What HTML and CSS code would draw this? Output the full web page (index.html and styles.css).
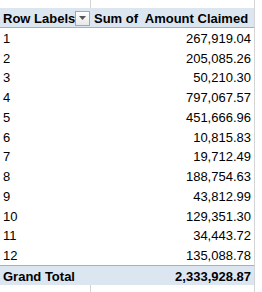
FILE: index.html
```html
<!DOCTYPE html>
<html lang="en">
<head>
    <meta charset="UTF-8">
    <title>Pivot Table - Amount Claimed</title>
    <link rel="stylesheet" href="styles.css">
</head>
<body>
    <div class="sheet">
        <div class="row filler top">
            <div class="cell col-a"></div>
            <div class="cell col-b"></div>
            <div class="cell col-c"></div>
        </div>

        <div class="row header">
            <div class="cell col-a">
                <span>Row Labels</span>
                <span class="filter-btn">
                    <svg width="7" height="4" viewBox="0 0 7 4"><path d="M0 0H7L3.5 4Z" fill="#555"/></svg>
                </span>
            </div>
            <div class="cell col-b">Sum of&nbsp; Amount Claimed</div>
            <div class="cell col-c"></div>
        </div>

        <div class="row"><div class="cell col-a">1</div><div class="cell col-b num">267,919.04</div><div class="cell col-c"></div></div>
        <div class="row"><div class="cell col-a">2</div><div class="cell col-b num">205,085.26</div><div class="cell col-c"></div></div>
        <div class="row"><div class="cell col-a">3</div><div class="cell col-b num">50,210.30</div><div class="cell col-c"></div></div>
        <div class="row"><div class="cell col-a">4</div><div class="cell col-b num">797,067.57</div><div class="cell col-c"></div></div>
        <div class="row"><div class="cell col-a">5</div><div class="cell col-b num">451,666.96</div><div class="cell col-c"></div></div>
        <div class="row"><div class="cell col-a">6</div><div class="cell col-b num">10,815.83</div><div class="cell col-c"></div></div>
        <div class="row"><div class="cell col-a">7</div><div class="cell col-b num">19,712.49</div><div class="cell col-c"></div></div>
        <div class="row"><div class="cell col-a">8</div><div class="cell col-b num">188,754.63</div><div class="cell col-c"></div></div>
        <div class="row"><div class="cell col-a">9</div><div class="cell col-b num">43,812.99</div><div class="cell col-c"></div></div>
        <div class="row"><div class="cell col-a">10</div><div class="cell col-b num">129,351.30</div><div class="cell col-c"></div></div>
        <div class="row"><div class="cell col-a">11</div><div class="cell col-b num">34,443.72</div><div class="cell col-c"></div></div>
        <div class="row"><div class="cell col-a">12</div><div class="cell col-b num">135,088.78</div><div class="cell col-c"></div></div>

        <div class="row total">
            <div class="cell col-a">Grand Total</div>
            <div class="cell col-b num">2,333,928.87</div>
            <div class="cell col-c"></div>
        </div>

        <div class="row filler bottom">
            <div class="cell col-a"></div>
            <div class="cell col-b"></div>
            <div class="cell col-c"></div>
        </div>
    </div>
</body>
</html>
```

FILE: styles.css
```css
html, body {
    margin: 0;
    padding: 0;
    background: #fff;
    overflow: hidden;
}
.sheet {
    width: 262px;
    height: 292px;
    font-family: 'Liberation Sans', Arial, sans-serif;
    font-size: 13px;
    color: #000;
}
.row {
    display: grid;
    grid-template-columns: 91px 163px 8px;
    height: 19.75px;
}
.cell {
    display: flex;
    align-items: center;
    padding: 1px 3px 0;
    white-space: nowrap;
    overflow: hidden;
    box-sizing: border-box;
}
.col-c {
    border-left: 1px solid #d4d4d4;
    padding: 0;
}
.num {
    justify-content: flex-end;
}
.filler.top {
    height: 8px;
}
.filler.bottom {
    height: 7px;
}
.filler .col-a {
    border-right: 1px solid #d4d4d4;
}
.header {
    height: 20px;
}
.header .col-a,
.header .col-b {
    background: #dce6f1;
    border-bottom: 1px solid #95b3d7;
    font-weight: bold;
}
.header .col-a {
    justify-content: space-between;
    padding-right: 1px;
}
.filter-btn {
    width: 13px;
    height: 13px;
    border: 1px solid #a6a6a6;
    background: linear-gradient(#ffffff, #e8e8e8);
    display: flex;
    align-items: center;
    justify-content: center;
}
.total {
    height: 20px;
}
.total .col-a,
.total .col-b {
    background: #dce6f1;
    border-top: 1px solid #95b3d7;
    font-weight: bold;
}
```
